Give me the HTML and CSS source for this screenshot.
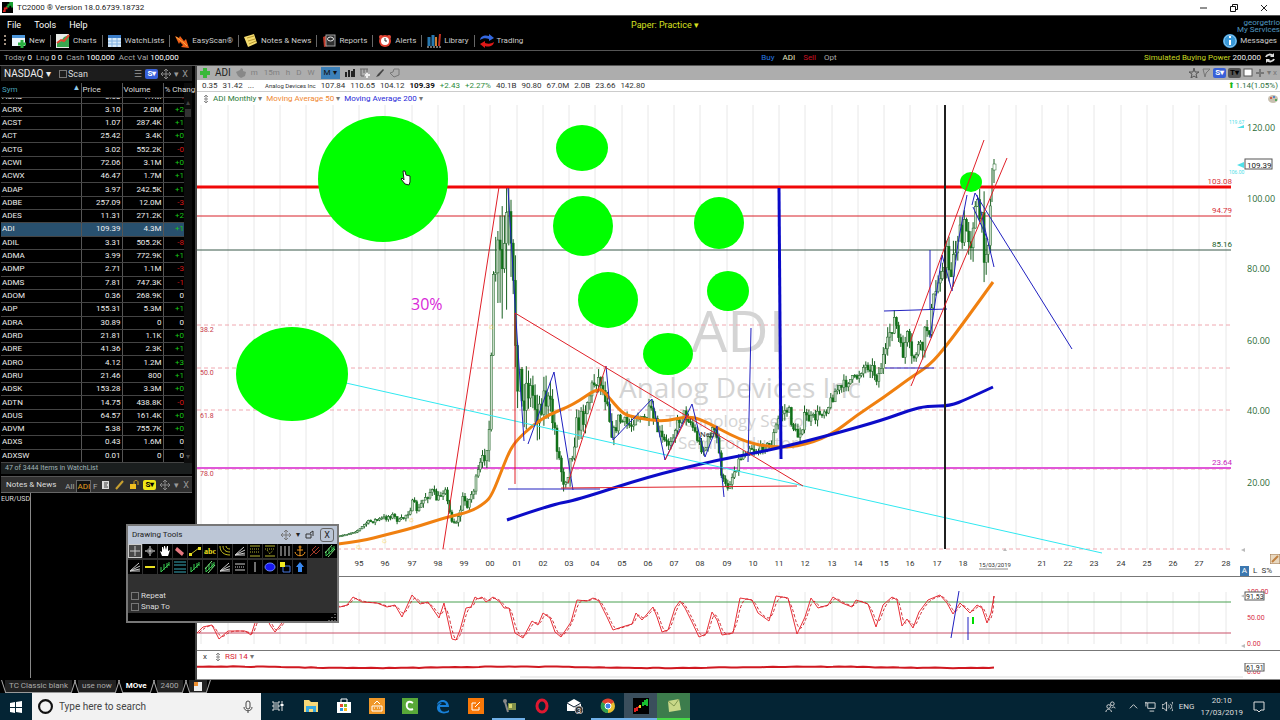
FILE: index.html
```html
<!DOCTYPE html>
<html lang="en">
<head>
    <meta charset="UTF-8">
    <meta name="viewport" content="width=device-width, initial-scale=1.0">
    <title>TC2000</title>
    <link rel="stylesheet" href="styles.css">
</head>
<body>
    <header class="titlebar">
        <svg class="logo" viewBox="0 0 12 12"><rect width="12" height="12" fill="#000"/><path d="M1 10h2V7h2V5" stroke="#e02020" stroke-width="2" fill="none"/><path d="M5 5h2V3h2V1h2v5" stroke="#18a030" stroke-width="2" fill="none"/></svg>
        <span class="title">TC2000 ® Version 18.0.6739.18732</span>
        <div class="window-buttons">
            <button aria-label="Minimize"><svg viewBox="0 0 10 10"><path d="M1 5h7" stroke="#222"/></svg></button>
            <button aria-label="Restore"><svg viewBox="0 0 10 10"><path d="M1.500 3.500h5v5h-5zM3.500 3V1.500h5v5H7" fill="none" stroke="#111"/></svg></button>
            <button aria-label="Close"><svg viewBox="0 0 10 10"><path d="M2 2l6 6M8 2l-6 6" stroke="#222"/></svg></button>
        </div>
    </header>

    <div class="menubar">
        <nav class="menu">
            <button>File</button>
            <button>Tools</button>
            <button>Help</button>
        </nav>
        <button class="account-name">Paper: Practice ▾</button>
        <div class="user">
            <a href="#">georgetrio</a>
            <a href="#">My Services</a>
        </div>
    </div>

    <nav class="toolbar">
        <svg class="grip" viewBox="0 0 4 14"><path d="M2 1v2M2 5v2M2 9v2" stroke="#a09080" stroke-width="2"/></svg>
        <button><svg viewBox="0 0 14 14"><rect y="1" width="13" height="11" fill="#eef6fc"/><rect y="1" width="13" height="3" fill="#4a94d8"/><path d="M10 6v8M6 10h8" stroke="#28b040" stroke-width="3"/></svg>New</button>
        <button><svg viewBox="0 0 14 14"><rect width="13" height="14" fill="#e8ece8"/><path d="M1 13V9l4-2 3-4 5-2v12z" fill="#38a850"/><path d="M1 9l4-3 3 1 5-6" fill="none" stroke="#e04830" stroke-width="2"/></svg>Charts</button>
        <button><svg viewBox="0 0 14 14"><rect y="1" width="13" height="12" fill="#d8eafa"/><rect y="1" width="13" height="3" fill="#3a7cc8"/><path d="M0 7h13M0 10h13M4 4v9M9 4v9" stroke="#80b0e0"/></svg>WatchLists</button>
        <button><svg viewBox="0 0 14 14"><path d="M0 2l4 2 1-2 4 5 2-2 3 9-8-1 2-2-3-3-1 2z" fill="#f06018"/><path d="M1 3l4 3 4 3 3 3" stroke="#f8b040" fill="none"/></svg>EasyScan®</button>
        <button><svg viewBox="0 0 14 14"><path d="M0 3l10-3 3 9-9 4z" fill="#f4dc70"/><path d="M3 4l7-2M4 7l7-2M5 10l7-3" stroke="#b89830"/></svg>Notes &amp; News</button>
        <button><svg viewBox="0 0 14 14"><path d="M1 3l5-2v11l-4 1z" fill="#c03828"/><rect x="4" y="1" width="9" height="11" fill="#303030" stroke="#a0a0a0"/><ellipse cx="8.500" cy="5" rx="3" ry="2" fill="none" stroke="#eee"/></svg>Reports</button>
        <button><svg viewBox="0 0 14 14"><circle cx="3" cy="3" r="2" fill="#e85040"/><circle cx="11" cy="3" r="2" fill="#e85040"/><circle cx="7" cy="7" r="6" fill="#e04030"/><circle cx="7" cy="7" r="4" fill="#fff"/><path d="M7 4v3h2" fill="none" stroke="#333"/></svg>Alerts</button>
        <button><svg viewBox="0 0 14 14"><path d="M2 3v9M6 1v11" stroke="#2878b0" stroke-width="3"/><path d="M9 3v9" stroke="#d08030" stroke-width="2"/><path d="M13 0l-1 12" stroke="#c03020" stroke-width="2"/><path d="M0 13h14" stroke="#ddd" stroke-dasharray="2 1"/></svg>Library</button>
        <button><svg viewBox="0 0 14 14"><path d="M0 6c1-5 6-5 9-4V0l5 4-5 3V5C6 4 3 4 0 6z" fill="#3468e0"/><path d="M14 8c-1 5-6 5-9 4v2L0 10l5-3v2c3 1 6 1 9-1z" fill="#e01818"/></svg>Trading</button>
        <button class="messages"><svg viewBox="0 0 14 14"><circle cx="7" cy="7" r="7" fill="#3898d8"/><circle cx="7" cy="7" r="6" fill="none" stroke="#90c8f0"/><path d="M7 2v2M7 6v5" stroke="#fff" stroke-width="2"/></svg>Messages</button>
    </nav>

    <div class="accountbar">
        <p>Today <b>0</b></p>
        <p>Lng <b>0 0</b></p>
        <p>Cash <b>100,000</b></p>
        <p>Acct Val <b>100,000</b></p>
        <div class="orders">
            <button class="buy">Buy</button>
            <span class="ticker">ADI</span>
            <button class="sell">Sell</button>
            <button>Opt</button>
        </div>
        <p class="power"><span>Simulated Buying Power</span> 200,000</p>
        <button aria-label="Refresh"><svg viewBox="0 0 10 10"><path d="M1 4c1-3 5-3 7-1M9 6c-1 3-5 3-7 1" fill="none" stroke="#ddd" stroke-width="2"/><path d="M9 0v4H5zM1 10V6h4z" fill="#ddd"/></svg></button>
    </div>

    <main class="workspace">
        <aside class="sidebar">
            <section class="watchlist">
                <div class="panel-head">
                    <button class="list-name">NASDAQ ▾</button>
                    <label><input type="checkbox">Scan</label>
                    <div class="panel-tools">
                        <button aria-label="Menu">☰</button>
                        <button class="sync">S▾</button>
                        <button aria-label="Move"><svg viewBox="0 0 10 10"><path d="M5 0v10M0 5h10M3 2l2-2 2 2M3 8l2 2 2-2M2 3L0 5l2 2M8 3l2 2-2 2" fill="none" stroke="#888"/></svg></button>
                        <button aria-label="Options">▾</button>
                        <button aria-label="Close">X</button>
                    </div>
                </div>
                <div class="table-wrap">
                    <table>
                        <thead>
                            <tr><th class="sym">Sym<i>▲</i></th><th>Price</th><th>Volume</th><th>% Chang</th></tr>
                        </thead>
                        <tbody id="rows"></tbody>
                    </table>
                    <div class="scrollbar"><i>▴</i><b></b><i class="down">▾</i></div>
                </div>
                <p class="count">47 of 3444 Items in WatchList</p>
            </section>
            <section class="notes">
                <div class="panel-head">
                    <h2>Notes &amp; News</h2>
                    <div class="note-tabs">
                        <button>All</button><button class="active">ADI</button><button>F</button>
                    </div>
                    <div class="panel-tools">
                        <button aria-label="Note"><svg viewBox="0 0 10 10"><rect x="1" y="1" width="7" height="8" fill="#ddd"/><path d="M3 3h4M3 5h3M3 7h4" stroke="#444"/></svg></button>
                        <button aria-label="Edit"><svg viewBox="0 0 10 10"><path d="M1 9l7-8" stroke="#c8a030" stroke-width="2"/></svg></button>
                        <button aria-label="Lock"><svg viewBox="0 0 10 10"><rect x="1" y="4" width="6" height="5" fill="#f0c020"/><path d="M5 4V2c0-2 4-2 4 0v3" fill="none" stroke="#d0a020"/></svg></button>
                        <button class="sync yellow">S▾</button>
                        <button aria-label="Move"><svg viewBox="0 0 10 10"><path d="M5 0v10M0 5h10M3 2l2-2 2 2M3 8l2 2 2-2M2 3L0 5l2 2M8 3l2 2-2 2" fill="none" stroke="#888"/></svg></button>
                        <button aria-label="Options">▾</button>
                        <button aria-label="Close">X</button>
                    </div>
                </div>
                <div class="notes-body"><p>EUR/USD</p></div>
            </section>
        </aside>

        <section class="chart">
            <div class="chart-head">
                <button aria-label="Add"><svg viewBox="0 0 10 10"><path d="M5 0v10M0 5h10" stroke="#38b838" stroke-width="4"/></svg></button>
                <span class="chart-symbol">ADI</span>
                <button aria-label="Share"><svg viewBox="0 0 10 10"><path d="M0 4l4-2 1-2 2 1v2l3 1-1 4-4 2-3-2z" fill="#888"/></svg></button>
                <div class="frames">
                    <button>m</button><button>15m</button><button>h</button><button>D</button><button>W</button><button class="active">M ▾</button>
                </div>
                <button aria-label="Bars"><svg viewBox="0 0 10 10"><path d="M1 9V4M4 9V2M7 9V3M9 9V1" stroke="#222" stroke-width="2"/></svg></button>
                <button aria-label="Indicator"><svg viewBox="0 0 10 10"><path d="M0 1h8M1 1v7h3M4 1v4M7 1v3" fill="none" stroke="#666"/><path d="M7 5v5M5 7h5" stroke="#eee" stroke-width="2"/></svg></button>
                <button aria-label="Draw"><svg viewBox="0 0 10 10"><path d="M1 9l2-3 5-5 1 1-5 6z" fill="#444"/></svg></button>
                <button aria-label="Note"><svg viewBox="0 0 10 10"><path d="M0 5l3-1 1-3h5v6l-5 2z" fill="none" stroke="#777"/></svg></button>
                <div class="chart-tools">
                    <button aria-label="Favorite"><svg viewBox="0 0 10 10"><path d="M5 0l1 4h4L7 6l1 4-3-2-3 2 1-4-3-2h4z" fill="none" stroke="#555"/></svg></button>
                    <button aria-label="Flag"><svg viewBox="0 0 10 10"><path d="M2 1h7L5 5 4 9z" fill="none" stroke="#777"/></svg></button>
                    <button class="sync">S▾</button>
                    <button class="sync gray">T▾</button>
                    <button aria-label="Window"><svg viewBox="0 0 10 10"><rect x="1" y="1" width="8" height="7" fill="#fff" stroke="#555"/></svg></button>
                    <button aria-label="Move"><svg viewBox="0 0 10 10"><path d="M5 1v8M1 5h8" stroke="#777" stroke-width="2"/></svg></button>
                    <button aria-label="Options">▾</button>
                    <button aria-label="Close">x</button>
                </div>
            </div>
            <div class="quote">
                <span>0.35</span><span>31.42</span><span class="dots">...</span><span class="company">Analog Devices Inc</span>
                <span>107.84</span><span>110.65</span><span>104.12</span><b>109.39</b>
                <span class="up">+2.43</span><span class="up">+2.27%</span>
                <span>40.1B</span><span>90.80</span><span>67.0M</span><span>2.0B</span><span>23.66</span><span>142.80</span>
                <span class="change"><i>⬆</i>1.14(1.05%)</span>
            </div>
            <div class="legend">
                <svg class="drag" viewBox="0 0 6 10"><path d="M3 1v8M1 3l2-2 2 2M1 7l2 2 2-2M1 5h4" fill="none" stroke="#888"/></svg>
                <button class="green">ADI Monthly <i>▾</i></button>
                <button class="orange">Moving Average 50 <i>▾</i></button>
                <button class="blue">Moving Average 200 <i>▾</i></button>
                <svg class="palette" viewBox="0 0 10 10"><ellipse cx="5" cy="5" rx="5" ry="4" fill="#c8c0b0"/><circle cx="3" cy="4" r="1" fill="#d04030"/><circle cx="6" cy="3" r="1" fill="#3070d0"/><circle cx="8" cy="6" r="1" fill="#30a040"/></svg>
            </div>

            <div class="price-pane">
                <svg class="pane" viewBox="197 105 1083 471" role="img" aria-label="ADI monthly price">
                    <g id="price-grid" class="grid"></g>
                    <g class="watermark">
                        <text x="738" y="352" class="w-symbol">ADI</text>
                        <text x="740" y="398" class="w-name">Analog Devices Inc</text>
                        <text x="738" y="427" class="w-sector">Technology Sector</text>
                        <text x="738" y="449" class="w-sector">Semiconductor</text>
                    </g>
                    <g class="fib">
                        <path d="M197 325H1231M197 368H1231M197 410H1231M197 469H1231M197 549H1231"/>
                        <text x="200" y="332">38.2</text>
                        <text x="200" y="375">50.0</text>
                        <text x="200" y="418">61.8</text>
                        <text x="200" y="476">78.0</text>
                    </g>
                    <path class="level-dark" d="M197 250H1231"/>
                    <path class="level-rose" d="M197 216H1231"/>
                    <path class="level-magenta" d="M197 468H1231"/>
                    <g id="candles"></g>
                    <g class="splits"><text x="355" y="549">☼</text><text x="381" y="543">☼</text><text x="408" y="522">☼</text><text x="488" y="329">☼</text></g>
                    <path id="ma50" class="ma50"/>
                    <path id="ma200" class="ma200"/>
                    <path class="cyan-line" d="M346 383L1102 553"/>
                    <path class="level-red" d="M197 187H1231"/>
                    <path class="blue-line" d="M508 188L516 320 524 441M528 444L554 372 573 490M508 489H600M606 366L613 440 652 399 665 460M665 460L692 404 705 457 717 426 724 497M751 328L748 462M884 311L947 309M885 368H934M930 250V310M930 338L942 255 952 291 958 243 967 195M972 205L975 193 1072 349M977 195L994 267M973 207L988 240"/>
                    <path class="blue-thick" d="M779 188L781 459"/>
                    <path class="cursor-line" d="M945 105V549"/>
                    <g class="dots-green">
                        <ellipse cx="383" cy="179" rx="65" ry="63"/>
                        <ellipse cx="582" cy="148" rx="26" ry="23"/>
                        <ellipse cx="583" cy="226" rx="30" ry="30"/>
                        <ellipse cx="719" cy="223" rx="25" ry="26"/>
                        <ellipse cx="608" cy="300" rx="30" ry="28"/>
                        <ellipse cx="728" cy="291" rx="21" ry="20"/>
                        <ellipse cx="668" cy="354" rx="25" ry="21"/>
                        <ellipse cx="292" cy="374" rx="56" ry="47"/>
                        <ellipse cx="971" cy="182" rx="11" ry="10"/>
                    </g>
                    <path class="red-line" d="M443 549L499 187M515 484V313L803 486M561 488L797 486M568 483L606 366M665 460L688 415M910 342L984 140M911 386L1007 158"/>
                    <text x="411" y="310" class="percent">30%</text>
                    <text x="700" y="437" class="neck">Neck</text>
                    <g class="level-labels">
                        <text x="1232" y="184" class="red">103.08</text>
                        <text x="1232" y="213" class="red">94.79</text>
                        <text x="1232" y="247" class="dark">85.16</text>
                        <text x="1232" y="465" class="magenta">23.64</text>
                    </g>
                    <g class="axis-y">
                        <text x="1247" y="131">120.00</text>
                        <text x="1247" y="202">100.00</text>
                        <text x="1247" y="272">80.00</text>
                        <text x="1247" y="344">60.00</text>
                        <text x="1247" y="414">40.00</text>
                        <text x="1247" y="486">20.00</text>
                    </g>
                    <g class="targets">
                        <text x="1229" y="124">119.67</text><path d="M1237 128l7-3v3z"/>
                        <text x="1229" y="174">106.00</text><path d="M1237 165l7-3v6z"/>
                    </g>
                    <rect x="1245" y="159" width="27" height="10" class="tag"/>
                    <text x="1247" y="168" class="tag-text">109.39</text>
                    <path d="M1241 550l4-2v4zM1003 551l2-3 2 3z" fill="#bbb"/>
                    <g id="axis-x" class="axis-x"></g>
                    <text x="979" y="567" class="date">15/03/2019</text>
                    <path d="M979 569h29" stroke="#888"/>
                    <path d="M405 184l-4-5 1-1 2 2-1-9h2l1 4 4 1v6l-1 3z" fill="#fff" stroke="#222"/>
                </svg>
                <div class="scale-buttons">
                    <button class="pencil" aria-label="Edit drawings"><svg viewBox="0 0 10 10"><rect width="10" height="10" fill="#e8d8c0" stroke="#a07850"/><path d="M2 8l6-6" stroke="#c08040" stroke-width="2"/></svg></button>
                    <button class="active">A</button><button>L</button><button>S%</button>
                </div>
            </div>

            <svg class="pane stoch" viewBox="197 577 1083 73" role="img" aria-label="Stochastics">
                <g id="stoch-grid" class="grid"></g>
                <path class="over-bought" d="M197 602H1231"/>
                <path class="over-sold" d="M197 633H1231"/>
                <path id="stoch-line" class="stoch-line"/>
                <path id="stoch-avg" class="stoch-avg"/>
                <path class="blue-line" d="M959 591L951 638M968 617V640"/>
                <path d="M973 617v7" stroke="#0d0" stroke-width="2"/>
                <text x="1247" y="594" class="osc">100.00</text>
                <text x="1247" y="620" class="osc">50.00</text>
                <text x="1247" y="646" class="osc">0.00</text>
                <rect x="1245" y="592" width="19" height="8" class="tag"/>
                <text x="1246" y="599" class="tag-small">91.53</text>
                <path d="M1241 646l4-2v4zM1241 596l4-2v4z" fill="#bbb"/>
            </svg>

            <div class="legend rsi-legend">
                <button aria-label="Close RSI">x</button>
                <svg class="drag" viewBox="0 0 6 10"><path d="M3 1v8M1 3l2-2 2 2M1 7l2 2 2-2M1 5h4" fill="none" stroke="#888"/></svg>
                <button class="red">RSI 14 <i>▾</i></button>
            </div>
            <svg class="pane" viewBox="197 663 1083 16" role="img" aria-label="RSI">
                <path id="rsi" class="rsi-line"/>
                <path d="M520 677H1243" stroke="#ddd"/>
                <text x="1247" y="674" class="osc">0.00</text>
                <rect x="1245" y="663" width="19" height="8" class="tag"/>
                <text x="1246" y="670" class="tag-small">61.91</text>
            </svg>
        </section>

        <section class="tools-window">
            <div class="tools-title">
                <h2>Drawing Tools</h2>
                <svg viewBox="0 0 10 10"><path d="M5 0v10M0 5h10M3 2l2-2 2 2M3 8l2 2 2-2M2 3L0 5l2 2M8 3l2 2-2 2" fill="none" stroke="#777"/></svg>
                <i>▾</i>
                <svg class="dock" viewBox="0 0 10 10"><path d="M1 4h5v4H1zM5 3l3-2v5" fill="none" stroke="#333"/></svg>
                <button aria-label="Close">X</button>
            </div>
            <div class="tool-grid" id="tool-grid"></div>
            <div class="tool-options">
                <label><input type="checkbox">Repeat</label>
                <label><input type="checkbox">Snap To</label>
            </div>
            <div class="resize"><svg viewBox="0 0 10 8"><path d="M8 1v1M5 4v1M8 4v1M2 7v1M5 7v1M8 7v1" stroke="#bbb"/></svg></div>
        </section>
    </main>

    <nav class="layout-tabs">
        <button>TC Classic blank</button>
        <button>use now</button>
        <button class="active">MOve</button>
        <button>2400</button>
        <button aria-label="New layout"><svg viewBox="0 0 10 10"><rect x="1" y="1" width="8" height="9" fill="#eee"/><rect x="1" y="1" width="4" height="4" fill="#f09030"/></svg></button>
    </nav>

    <footer class="taskbar">
        <button class="start" aria-label="Start"><svg viewBox="0 0 12 12"><path d="M0 2l5-1v5H0zM6 1l6-1v6H6zM0 7h5v5l-5-1zM6 7h6v5l-6-1z" fill="#fff"/></svg></button>
        <label class="search">
            <svg viewBox="0 0 14 14"><circle cx="7" cy="7" r="6" fill="none" stroke="#111" stroke-width="2"/></svg>
            <input type="text" placeholder="Type here to search" aria-label="Search">
            <svg class="mic" viewBox="0 0 10 14"><rect x="3" y="1" width="4" height="8" rx="2" fill="none" stroke="#444"/><path d="M1 7c0 5 8 5 8 0M5 11v2" fill="none" stroke="#444"/></svg>
        </label>
        <div class="apps">
            <button aria-label="Task view"><svg viewBox="0 0 16 16"><path d="M3 3v2h6V3M3 13v-2h6v2M3 7h6v2H3zM12 3v10" fill="none" stroke="#ddd"/><path d="M12 6v2" stroke="#fff" stroke-width="3"/></svg></button>
            <button aria-label="Explorer"><svg viewBox="0 0 16 16"><path d="M1 2h5l2 2h7v10H1z" fill="#f8d878"/><path d="M3 14V8h10v6h-3v-3H6v3z" fill="#38a8e0"/></svg></button>
            <button aria-label="Store"><svg viewBox="0 0 16 16"><path d="M5 4V1h6v3" fill="none" stroke="#fff"/><path d="M1 4h14v11H1z" fill="#fff"/><path d="M4 6h3v3H4z" fill="#e84830"/><path d="M8 6h3v3H8z" fill="#78b828"/><path d="M4 10h3v3H4z" fill="#2898e0"/><path d="M8 10h3v3H8z" fill="#f8b818"/></svg></button>
            <button aria-label="Screen app"><svg viewBox="0 0 16 16"><rect width="16" height="16" fill="#f09828"/><path d="M3 8h10v5H3zM5 10h1M8 10h1M10 10h1M5 6l3-3 3 3" fill="none" stroke="#fff"/></svg></button>
            <button aria-label="Camtasia"><svg viewBox="0 0 16 16"><rect width="16" height="16" fill="#58a838"/><path d="M11 5c-5-3-7 0-6 4 1 3 4 3 6 2" fill="none" stroke="#fff" stroke-width="2"/></svg></button>
            <button aria-label="Edge"><svg viewBox="0 0 16 16"><path d="M2 7C3 0 14 0 14 9H5c0 5 5 6 9 3v2c-5 3-12 1-12-4 0-3 2-5 5-5-1 1-2 1-2 2h6c0-4-6-4-9 0z" fill="#1880d8"/></svg></button>
            <button aria-label="Editor"><svg viewBox="0 0 16 16"><rect width="16" height="16" fill="#f87808"/><path d="M11 9v3H4V5h4M7 9l5-5" fill="none" stroke="#fff"/></svg></button>
            <button class="running" aria-label="Recorder"><svg viewBox="0 0 16 16"><circle cx="4" cy="3" r="2" fill="#888"/><path d="M4 4l3 10" stroke="#888" stroke-width="2"/><path d="M7 5h8v7H7z" fill="#80904a"/><path d="M8 6h3v4H8z" fill="#d8d870"/></svg></button>
            <button aria-label="Opera"><svg viewBox="0 0 16 16"><ellipse cx="8" cy="8" rx="5" ry="6" fill="none" stroke="#e01830" stroke-width="3"/></svg></button>
            <button aria-label="Mail"><svg viewBox="0 0 16 16"><path d="M0 5l7-4 7 4v8H0z" fill="#fff"/><path d="M0 5l7 4 7-4" fill="none" stroke="#123"/><circle cx="12" cy="12" r="4" fill="#333" stroke="#aaa"/><text x="10" y="15" font-size="7" fill="#fff">3</text></svg></button>
            <button class="running" aria-label="Chrome"><svg viewBox="0 0 16 16"><circle cx="8" cy="8" r="7" fill="#e8c030"/><path d="M8 8L2 4a7 7 0 0112 0z" fill="#e04030"/><path d="M8 8l0 7A7 7 0 012 4z" fill="#30a050"/><circle cx="8" cy="8" r="3" fill="#4080e8" stroke="#fff"/></svg></button>
            <button class="running current" aria-label="TC2000"><svg viewBox="0 0 16 16"><rect width="16" height="16" fill="#000"/><path d="M2 14v-4M4 13V9M6 10V8" stroke="#e02020" stroke-width="2"/><path d="M7 10V7" stroke="#e8d020" stroke-width="2"/><path d="M10 8V4M12 7V2M14 8V1" stroke="#18c030" stroke-width="2"/></svg></button>
            <button class="running green-app" aria-label="Notes"><svg viewBox="0 0 16 16"><path d="M2 3l11-2 2 11-12 2z" fill="#c8d888"/><path d="M2 3l6 5 5-7" fill="none" stroke="#809850"/></svg></button>
        </div>
        <div class="tray">
            <svg viewBox="0 0 12 12"><circle cx="4" cy="6" r="2" fill="none" stroke="#ddd"/><path d="M1 12c0-4 6-4 6 0M7 8c1-2 4-2 4 0" fill="none" stroke="#ddd"/><circle cx="8" cy="3" r="2" fill="none" stroke="#ddd"/></svg>
            <svg class="up-arrow" viewBox="0 0 12 12"><path d="M2 8l4-4 4 4" fill="none" stroke="#ddd"/></svg>
            <svg viewBox="0 0 12 12"><path d="M3 2h8v6H3zM5 11h5M1 1v5M0 2h3" fill="none" stroke="#ddd"/></svg>
            <svg viewBox="0 0 12 12"><path d="M0 4h2l3-3v10L2 8H0zM7 4c1 1 1 3 0 4M9 3c2 2 2 4 0 6M11 1c2 3 2 7 0 10" fill="none" stroke="#ddd"/></svg>
            <span>ENG</span>
            <p class="clock">20:10<br>17/03/2019</p>
            <svg class="bell" viewBox="0 0 12 12"><path d="M1 1h10v8H8l-2 2-2-2H1z" fill="none" stroke="#ddd"/></svg>
        </div>
    </footer>
    <script src="chart.js"></script>
</body>
</html>
```
FILE: styles.css
```css
* {
    box-sizing: border-box;
    margin: 0;
    padding: 0;
}

body {
    display: flex;
    flex-direction: column;
    min-height: 100vh;
    background: #000;
    color: #ddd;
    font-family: Roboto, "Open Sans", sans-serif;
    font-size: 8px;
    line-height: 12px;
    overflow-x: hidden;
}

button {
    background: none;
    border: none;
    color: inherit;
    font: inherit;
    white-space: nowrap;
}

button svg {
    display: block;
    width: 10px;
    height: 10px;
}

a {
    color: inherit;
    text-decoration: none;
}

i {
    font-style: normal;
}

h2 {
    font-size: 8px;
    font-weight: normal;
    white-space: nowrap;
}

input[type="checkbox"] {
    appearance: none;
    width: 8px;
    height: 8px;
    border: 1px solid #777;
}

label {
    display: flex;
    align-items: center;
    gap: 1px;
}

/* title and menus */
.titlebar {
    display: flex;
    align-items: center;
    gap: 4px;
    height: 15px;
    padding-left: 2px;
    background: #fff;
    color: #222;
}

.logo {
    width: 11px;
    height: 11px;
}

.window-buttons {
    display: flex;
    gap: 20px;
    margin-left: auto;
    padding-right: 11px;
}

.menubar {
    display: grid;
    grid-template-columns: 1fr auto 1fr;
    height: 17px;
    padding-left: 50px;
    align-items: center;
    border-top: 1px solid #555;
    font-size: 9px;
}

.menu {
    display: flex;
    gap: 13px;
    margin-left: -43px;
    color: #fff;
}

.account-name {
    color: #d8e020;
}

.user {
    display: flex;
    flex-direction: column;
    align-items: flex-end;
    padding-top: 3px;
    font-size: 8px;
    line-height: 7px;
    color: #5098c0;
}

.toolbar {
    display: flex;
    align-items: center;
    height: 19px;
    padding-left: 3px;
    border-bottom: 1px solid #555;
    color: #ccc;
}

.toolbar button {
    display: flex;
    align-items: center;
    gap: 3px;
    height: 12px;
    padding: 0 5px;
    border-right: 1px solid #666;
}

.toolbar button svg {
    width: 14px;
    height: 14px;
}

.grip {
    width: 4px;
    height: 14px;
}

.toolbar button:nth-last-child(2) {
    border: none;
}

.toolbar .messages {
    margin-left: auto;
    padding-right: 3px;
    border: none;
}

.accountbar {
    display: flex;
    gap: 4px;
    align-items: center;
    height: 15px;
    padding: 0 5px 0 4px;
    border-bottom: 1px solid #555;
    color: #aaa;
}

.accountbar b {
    font-weight: normal;
    color: #fff;
}

.orders {
    display: flex;
    gap: 8px;
    margin: 0 auto;
    padding-left: 275px;
}

.buy {
    color: #2878e0;
}

.ticker {
    color: #e8e8c0;
}

.sell {
    color: #c81020;
}

.power {
    color: #eee;
}

.power span {
    color: #c8d820;
}

/* left side */
.workspace {
    display: flex;
    flex: 1;
    position: relative;
}

.sidebar {
    display: flex;
    flex-direction: column;
    width: 197px;
    padding: 0 3px 0 1px;
    border-right: 2px solid #444;
}

.watchlist {
    display: flex;
    flex-direction: column;
    height: 410px;
}

.panel-head {
    display: flex;
    align-items: center;
    height: 15px;
    padding-left: 3px;
    background: #1c1c1c;
}

.list-name {
    margin-right: 8px;
    font-size: 10px;
    color: #eee;
}

.panel-head label {
    font-size: 9px;
}

.panel-tools {
    display: flex;
    align-items: center;
    gap: 3px;
    margin-left: auto;
    padding-right: 4px;
    color: #999;
    font-size: 9px;
}

.sync {
    padding: 0 2px;
    border-radius: 2px;
    background: #3860d8;
    color: #fff;
    font-size: 8px;
    font-weight: bold;
    line-height: 10px;
}

.sync.yellow {
    background: #f0e818;
    color: #000;
}

.sync.gray {
    background: #555;
    color: #000;
}

.table-wrap {
    display: flex;
    flex: 1;
    margin-top: 2px;
}

table {
    position: relative;
    flex: none;
    width: 183px;
    height: 100%;
    table-layout: fixed;
    border-collapse: collapse;
    font-size: 8px;
}

th,
td {
    overflow: hidden;
    border-right: 1px solid #555;
    border-bottom: 1px solid #444;
    line-height: 12px;
    white-space: nowrap;
}

th {
    height: 14px;
    padding-left: 1px;
    font-weight: normal;
    text-align: left;
    width: 41px;
}

th:last-child {
    width: 21px;
    overflow: visible;
}

th.sym {
    width: 80px;
    color: #48a0b8;
}

th i {
    float: right;
    color: #90c8e8;
    line-height: 8px;
}

td {
    padding: 0 1px;
    text-align: right;
    color: #eee;
}

td:first-child {
    text-align: left;
}

td:last-child,
th:last-child {
    border-right: none;
    padding-right: 0;
}

td.plus {
    color: #18c818;
}

td.minus {
    color: #d81818;
}

tr.selected {
    background: #28506e;
}

.cut td {
    height: 6px;
}

.cut div {
    display: flex;
    align-items: flex-end;
    justify-content: flex-end;
    height: 5px;
    overflow: hidden;
}

.cut td:first-child div {
    justify-content: flex-start;
}

.scrollbar {
    display: flex;
    flex-direction: column;
    align-items: center;
    flex: 1;
    padding-top: 14px;
    background: #0c0c0c;
    color: #444;
}

.scrollbar b {
    width: 6px;
    height: 8px;
    background: #333;
}

.scrollbar .down {
    margin-top: auto;
}

.count {
    height: 11px;
    margin-bottom: 2px;
    padding-left: 4px;
    background: #1a1e1e;
    color: #a0b4b8;
    font-size: 7px;
    line-height: 11px;
}

.notes {
    display: flex;
    flex-direction: column;
    flex: 1;
    border-top: 1px solid #555;
}

.notes .panel-head {
    height: 16px;
    padding-left: 5px;
    background: #303030;
    border-bottom: 1px solid #666;
}

.notes .panel-tools {
    gap: 4px;
    padding-right: 3px;
}

.note-tabs {
    display: flex;
    gap: 2px;
    align-self: flex-end;
    margin-left: 9px;
    line-height: 11px;
    color: #aaa;
}

.note-tabs .active {
    border: 1px solid #666;
    border-bottom: none;
    background: #111;
    color: #e8a020;
}

.notes-body {
    flex: 1;
    margin-bottom: 2px;
}

.notes-body p {
    width: 30px;
    height: 100%;
    border-right: 1px solid #888;
    font-size: 7px;
}

/* chart */
.chart {
    flex: 1;
    min-width: 0;
    background: #fff;
    color: #333;
    border-bottom: 1px solid #888;
}

.chart-head {
    display: flex;
    align-items: center;
    gap: 5px;
    height: 14px;
    padding: 0 3px;
    background: #adadad;
}

.chart-symbol {
    font-size: 10px;
    color: #222;
}

.frames {
    display: flex;
    gap: 6px;
    color: #808080;
}

.frames .active {
    padding: 0 3px;
    background: #3c80b8;
    color: #111;
}

.chart-tools {
    display: flex;
    align-items: center;
    gap: 2px;
    margin-left: auto;
    color: #777;
}

.quote {
    display: flex;
    gap: 5px;
    height: 12px;
    padding: 0 2px 0 5px;
    border-bottom: 1px solid #ccc;
}

.quote b {
    color: #111;
}

.dots {
    margin-right: 6px;
}

.company {
    font-size: 6px;
}

.up {
    color: #2e8b3a;
}

.change {
    margin-left: auto;
    color: #2e7040;
}

.change i {
    color: #18b818;
}

.legend {
    display: flex;
    align-items: center;
    gap: 4px;
    height: 13px;
    padding: 0 2px 0 6px;
}

.legend i {
    color: #777;
}

.drag {
    width: 6px;
    height: 10px;
}

.green {
    color: #2a7a38;
}

.orange {
    color: #f08830;
}

.blue {
    color: #2828d8;
}

.palette {
    width: 10px;
    height: 10px;
    margin-left: auto;
}

.price-pane {
    position: relative;
    border-bottom: 1px solid #777;
}

.pane {
    display: block;
    width: 100%;
    height: auto;
}

.stoch {
    border-bottom: 1px solid #777;
    box-sizing: content-box;
}

.rsi-legend {
    height: 12px;
    gap: 8px;
}

.rsi-legend .red {
    margin-left: -4px;
    color: #d82030;
}

.pane path {
    stroke-linejoin: round;
}

.grid {
    stroke: #e8e8e8;
}

.watermark {
    fill: #d4d4d4;
    font-family: "Open Sans", sans-serif;
    text-anchor: middle;
}

.w-symbol {
    font-size: 57px;
}

.w-name {
    font-size: 28px;
}

.w-sector {
    font-size: 17px;
}

.fib path {
    stroke: #f0a8b0;
    stroke-dasharray: 4 3;
}

.fib text {
    fill: #c83848;
    font-size: 7px;
}

.level-dark { stroke: #385848; }
.level-rose { stroke: #d82028; }
.level-magenta { stroke: #e058d8; stroke-width: 2; }
.level-red { stroke: #f00808; stroke-width: 3; }
.wick { stroke: #186020; }
.body-down { fill: #107018; stroke: #107018; }
.body-up { fill: #c8dcc8; stroke: #186020; }
.ma50 { fill: none; stroke: #f08010; stroke-width: 3; }
.ma200 { fill: none; stroke: #0c0cc8; stroke-width: 3; }
.cyan-line { stroke: #30e8f0; }
.red-line { fill: none; stroke: #e02028; }
.blue-line { fill: none; stroke: #2020c0; }
.blue-thick { stroke: #0808c8; stroke-width: 3; }
.cursor-line { stroke: #202020; stroke-width: 2; }
.dots-green { fill: #00ff00; }
.splits { fill: #f8d040; font-size: 8px; }

.percent {
    fill: #d828d8;
    font-family: "Open Sans", sans-serif;
    font-size: 16px;
}

.neck {
    fill: #333;
    font-size: 8px;
}

.level-labels {
    font-size: 8px;
    text-anchor: end;
}

.level-labels .red { fill: #d83038; }
.level-labels .dark { fill: #206028; }
.level-labels .magenta { fill: #c828c0; }

.axis-y {
    fill: #2c6c38;
    font-family: "Open Sans", sans-serif;
    font-size: 9px;
}

.targets {
    fill: #50e0e8;
    font-size: 5px;
}

.tag {
    fill: #fff;
    stroke: #555;
}

.tag-text {
    fill: #222;
    font-size: 8px;
}

.tag-small {
    fill: #222;
    font-size: 7px;
}

.axis-x {
    fill: #333;
    font-size: 8px;
    text-anchor: middle;
}

.date {
    fill: #333;
    font-size: 6px;
}

.scale-buttons {
    position: absolute;
    right: 8px;
    bottom: 0;
    display: flex;
    gap: 4px;
    line-height: 10px;
}

.scale-buttons .active {
    padding: 0 2px;
    background: #3c78b0;
    color: #fff;
}

.pencil {
    position: absolute;
    right: -8px;
    bottom: 12px;
}

.over-bought { stroke: #48a050; }
.over-sold { stroke: #c85068; }
.stoch-line { fill: none; stroke: #e83038; }
.stoch-avg { fill: none; stroke: #d02830; stroke-dasharray: 3 2; }
.rsi-line { fill: none; stroke: #d01820; stroke-width: 2; }

.osc {
    fill: #d83048;
    font-size: 7px;
}

/* floating palette */
.tools-window {
    position: absolute;
    left: 126px;
    top: 458px;
    border: 2px solid #777;
    background: #303030;
    color: #ddd;
}

.tools-title {
    display: flex;
    align-items: center;
    gap: 5px;
    height: 18px;
    padding: 0 3px 0 4px;
    background: #bcc6d6;
    color: #222;
}

.tools-title h2 {
    margin-right: auto;
}

.tools-title svg {
    width: 10px;
    height: 10px;
}

.tools-title button {
    width: 14px;
    border: 1px solid #666;
    border-radius: 3px;
    font-size: 9px;
}

.tool-grid {
    display: grid;
    grid-template-columns: repeat(14, 14px);
    gap: 2px 1px;
}

.tool-grid button {
    height: 14px;
    background: #000;
}

.tool-grid button:first-child {
    background: #484848;
    border: 1px solid #ccc;
}

.tool-grid svg {
    width: 12px;
    height: 12px;
    margin: auto;
    fill: none;
}

.tool-options {
    padding: 16px 0 1px 3px;
    line-height: 11px;
}

.tool-options label {
    gap: 2px;
}

.resize {
    height: 8px;
    background: #000;
}

.resize svg {
    display: block;
    width: 10px;
    height: 8px;
    margin-left: auto;
}

/* layout tabs */
.layout-tabs {
    display: flex;
    gap: 6px;
    height: 13px;
    padding-left: 5px;
    color: #aaa;
}

.layout-tabs button {
    position: relative;
    padding: 0 4px;
    background: #222;
    border-bottom: 1px solid #999;
}

.layout-tabs button::before,
.layout-tabs button::after {
    content: "";
    position: absolute;
    top: 0;
    bottom: 0;
    left: -2px;
    border-left: 1px solid #aaa;
    transform: skewX(18deg);
}

.layout-tabs button::after {
    left: auto;
    right: -2px;
    transform: skewX(-18deg);
}

.layout-tabs .active {
    background: #000;
    color: #fff;
    font-weight: bold;
}

/* taskbar */
.taskbar {
    display: flex;
    height: 27px;
    background: #042434;
    color: #ddd;
}

.start {
    width: 32px;
}

.start svg {
    width: 12px;
    height: 12px;
    margin: auto;
}

.search {
    display: flex;
    align-items: center;
    gap: 6px;
    width: 229px;
    padding: 0 8px 0 6px;
    background: #f2f2f2;
}

.search svg {
    width: 15px;
    height: 15px;
}

.search input {
    flex: 1;
    min-width: 0;
    border: none;
    background: none;
    font: inherit;
    font-size: 10px;
}

.search input::placeholder {
    color: #444;
}

.search .mic {
    width: 10px;
    height: 14px;
}

.apps {
    display: flex;
}

.apps button {
    width: 33px;
    border-bottom: 2px solid transparent;
}

.apps svg {
    width: 16px;
    height: 16px;
    margin: auto;
}

.apps .running {
    border-bottom-color: #70b0e8;
}

.apps .current {
    background: #3a4e5c;
}

.apps .green-app {
    background: #3c7c4c;
    border-bottom-color: #48d848;
}

.tray {
    display: flex;
    align-items: center;
    gap: 6px;
    margin-left: auto;
    padding-right: 15px;
}

.tray svg {
    width: 11px;
    height: 11px;
}

.tray .up-arrow {
    margin-left: 6px;
}

.clock {
    text-align: center;
}

.tray .bell {
    width: 12px;
    height: 12px;
    margin-left: 4px;
}
```
FILE: chart.js
```js
// watchlist rows: symbol, price, volume, % change
const stocks = [
    ['ACRX', '3.10', '2.0M', '+2'], ['ACST', '1.07', '287.4K', '+1'], ['ACT', '25.42', '3.4K', '+0'],
    ['ACTG', '3.02', '552.2K', '-0'], ['ACWI', '72.06', '3.1M', '+0'], ['ACWX', '46.47', '1.7M', '+1'],
    ['ADAP', '3.97', '242.5K', '+1'], ['ADBE', '257.09', '12.0M', '-3'], ['ADES', '11.31', '271.2K', '+2'],
    ['ADI', '109.39', '4.3M', '+1'], ['ADIL', '3.31', '505.2K', '-8'], ['ADMA', '3.99', '772.9K', '+1'],
    ['ADMP', '2.71', '1.1M', '-3'], ['ADMS', '7.81', '747.3K', '-1'], ['ADOM', '0.36', '268.9K', '0'],
    ['ADP', '155.31', '5.3M', '+1'], ['ADRA', '30.89', '0', '0'], ['ADRD', '21.81', '1.1K', '+0'],
    ['ADRE', '41.36', '2.3K', '+1'], ['ADRO', '4.12', '1.2M', '+3'], ['ADRU', '21.46', '800', '+1'],
    ['ADSK', '153.28', '3.3M', '+0'], ['ADTN', '14.75', '438.8K', '-0'], ['ADUS', '64.57', '161.4K', '+0'],
    ['ADVM', '5.38', '755.7K', '+0'], ['ADXS', '0.43', '1.6M', '0'], ['ADXSW', '0.01', '0', '0']
];

let html = '<tr class="cut"><td><div>ACRS</div></td><td><div>5.63</div></td><td><div>1.1M</div></td><td class="minus"><div>-4</div></td></tr>';
stocks.forEach(([sym, price, volume, change]) => {
    const sign = change[0] === '+' ? 'plus' : change[0] === '-' ? 'minus' : '';
    html += `<tr${sym === 'ADI' ? ' class="selected"' : ''}><td>${sym}</td><td>${price}</td><td>${volume}</td><td class="${sign}">${change}</td></tr>`;
});
document.getElementById('rows').innerHTML = html;

// year grid and labels, 1989 to 2028
const yearX = (year) => Math.round(359 + (year - 1995) * 26.26);
let grid = '';
let oscGrid = '';
let years = '';
for (let year = 1989; year <= 2028; year++) {
    const x = yearX(year);
    grid += `<path d="M${x} 105V549"/>`;
    oscGrid += `<path d="M${x} 592V644"/>`;
    if (year >= 1995 && year !== 2019 && year !== 2020) {
        years += `<text x="${x}" y="566">${String(year).slice(2)}</text>`;
    }
}
document.getElementById('price-grid').innerHTML = grid;
document.getElementById('stoch-grid').innerHTML = oscGrid;
document.getElementById('axis-x').innerHTML = years;

// price track: x, y of the close, size of the monthly range
const track = [
    [338, 537, 2], [350, 533, 3], [359, 530, 3], [366, 523, 6], [373, 521, 6], [385, 518, 8], [392, 515, 8],
    [400, 522, 8], [408, 512, 9], [413, 503, 12], [418, 511, 9], [425, 497, 12], [431, 491, 15], [438, 500, 12],
    [446, 486, 8], [448, 508, 10], [453, 522, 10], [458, 520, 10], [463, 499, 16], [468, 504, 14], [475, 485, 16],
    [480, 466, 16], [485, 455, 18], [489, 430, 30], [491, 385, 50], [493, 310, 90], [495, 265, 90], [499, 270, 120],
    [502, 280, 160], [505, 250, 170], [508, 240, 170], [511, 280, 140], [514, 320, 120], [518, 360, 100], [522, 405, 60],
    [526, 385, 50], [532, 392, 44], [537, 412, 44], [544, 395, 40], [550, 408, 40], [555, 430, 30], [560, 465, 28],
    [564, 480, 26], [570, 462, 34], [576, 428, 34], [583, 416, 30], [590, 393, 30], [596, 378, 26], [601, 380, 26],
    [604, 396, 28], [607, 392, 30], [610, 422, 24], [613, 437, 20], [618, 419, 20], [625, 423, 18], [631, 426, 18],
    [636, 413, 18], [643, 422, 18], [650, 412, 22], [656, 426, 18], [662, 440, 18], [668, 445, 14], [675, 429, 14],
    [682, 414, 18], [688, 416, 18], [694, 430, 16], [700, 446, 16], [705, 450, 14], [712, 428, 16], [717, 440, 22],
    [721, 468, 24], [724, 487, 16], [728, 486, 12], [734, 472, 14], [740, 458, 14], [750, 446, 12], [756, 452, 12],
    [764, 446, 12], [771, 446, 14], [775, 430, 16], [781, 412, 20], [788, 410, 18], [793, 425, 20], [797, 438, 18],
    [805, 417, 18], [812, 420, 16], [820, 413, 16], [828, 407, 14], [836, 390, 16], [842, 388, 16], [848, 380, 16],
    [855, 380, 16], [863, 367, 16], [870, 365, 18], [878, 378, 20], [883, 358, 24], [886, 357, 26], [890, 331, 26],
    [895, 318, 26], [898, 337, 30], [902, 357, 22], [907, 336, 26], [912, 362, 22], [918, 347, 22], [922, 352, 24],
    [926, 328, 26], [930, 326, 26], [933, 303, 30], [938, 283, 30], [942, 260, 30], [945, 272, 38], [947, 253, 34],
    [950, 273, 36], [954, 256, 36], [958, 233, 36], [962, 243, 40], [965, 227, 48], [968, 233, 40], [971, 238, 40],
    [974, 211, 38], [977, 208, 34], [980, 218, 40], [984, 243, 60], [987, 235, 54], [989, 243, 60], [991, 198, 30],
    [994, 166, 10]
];

function valueAt(x) {
    let i = 1;
    while (i < track.length - 1 && track[i][0] < x) i++;
    const [a, b] = [track[i - 1], track[i]];
    const t = (x - a[0]) / (b[0] - a[0]);
    return [a[1] + (b[1] - a[1]) * t, a[2] + (b[2] - a[2]) * t];
}

let seed = 7;
function random() {
    seed = (seed * 16807) % 2147483647;
    return seed / 2147483647;
}

let candles = '';
let open = 537;
for (let x = 338; x <= 992; x += 2.19) {
    const [mid, range] = valueAt(x);
    const close = mid + (random() - 0.5) * range * 0.7;
    const top = Math.max(190, Math.min(open, close));
    const bottom = Math.max(open, close);
    const high = Math.max(188, top - random() * range * 0.4);
    const low = bottom + random() * range * 0.4;
    candles += `<path class="wick" d="M${x.toFixed(1)} ${high.toFixed(1)}V${low.toFixed(1)}"/>`;
    candles += `<rect class="${close > open ? 'body-down' : 'body-up'}" stroke-width="0.5" x="${(x - 1).toFixed(1)}" y="${top.toFixed(1)}" width="2" height="${Math.max(1, bottom - top).toFixed(1)}"/>`;
    open = close;
}
// the last two months stand above the old high
candles += '<path class="wick" d="M992 168V202M994 159V183"/>';
candles += '<rect x="993" y="164" width="3" height="6" fill="#fff" stroke="#186020" stroke-width="0.5"/>';
document.getElementById('candles').innerHTML = candles;

// curve through the midpoints of the given points
function smooth(points) {
    let d = `M${points[0]}`;
    for (let i = 1; i < points.length - 1; i++) {
        const mx = (points[i][0] + points[i + 1][0]) / 2;
        const my = (points[i][1] + points[i + 1][1]) / 2;
        d += `Q${points[i]} ${mx},${my}`;
    }
    return d + `L${points[points.length - 1]}`;
}

const ma50 = [[338, 544], [362, 541], [385, 535], [413, 528], [447, 517], [470, 512], [485, 503], [492, 495], [503, 467],
    [510, 450], [517, 440], [533, 425], [550, 414], [573, 405], [599, 387], [607, 395], [622, 413], [632, 417], [663, 422],
    [687, 416], [703, 420], [740, 440], [767, 447], [797, 447], [830, 436], [857, 415], [883, 398], [910, 378], [930, 365],
    [947, 345], [967, 318], [993, 282]];
const ma200 = [[507, 520], [550, 505], [577, 500], [647, 477], [713, 461], [750, 454], [783, 447], [830, 435], [883, 420],
    [910, 410], [927, 406], [950, 406], [967, 399], [993, 387]];
document.getElementById('ma50').setAttribute('d', smooth(ma50));
document.getElementById('ma200').setAttribute('d', smooth(ma200));

const stoch = [[197, 633], [203, 627], [212, 625], [219, 639], [228, 631], [245, 631], [251, 635], [255, 623], [262, 605],
    [270, 625], [275, 632], [282, 623], [300, 600], [320, 604], [340, 607], [347, 605], [353, 597], [362, 602], [377, 603],
    [387, 607], [395, 605], [402, 617], [412, 595], [420, 604], [428, 602], [439, 618], [444, 603], [452, 639], [456, 640],
    [460, 630], [466, 608], [471, 607], [475, 597], [478, 599], [482, 597], [486, 602], [493, 597], [500, 602], [504, 608],
    [509, 608], [515, 633], [523, 638], [532, 621], [538, 625], [543, 613], [550, 618], [555, 632], [561, 637], [571, 622],
    [577, 600], [587, 601], [593, 598], [599, 601], [607, 617], [613, 630], [622, 627], [632, 624], [636, 613], [642, 620],
    [653, 607], [657, 617], [662, 632], [668, 630], [675, 608], [680, 601], [685, 608], [692, 622], [699, 637], [706, 634],
    [712, 612], [717, 620], [722, 635], [733, 633], [740, 598], [752, 600], [758, 613], [769, 621], [776, 596], [788, 598],
    [797, 634], [805, 617], [811, 598], [818, 608], [828, 605], [833, 597], [842, 603], [852, 607], [856, 600], [868, 604],
    [876, 627], [883, 605], [892, 597], [897, 600], [902, 626], [907, 619], [913, 628], [919, 612], [928, 600], [940, 595],
    [947, 603], [953, 614], [960, 603], [970, 613], [977, 605], [982, 608], [987, 623], [991, 613], [994, 596]];
document.getElementById('stoch-line').setAttribute('d', 'M' + stoch.join('L'));
document.getElementById('stoch-avg').setAttribute('d', smooth(stoch.map(([x, y]) => [Math.min(x + 2, 994), y])));

const rsi = [];
for (let x = 197; x <= 997; x += 6) {
    rsi.push([Math.min(x, 994), (667 + Math.sin(x / 47) * 0.7 + random() * 0.6).toFixed(1)]);
}
document.getElementById('rsi').setAttribute('d', 'M' + rsi.join('L'));

// drawing palette, name and icon
const ladder = '<path d="M2 11V6M5 9V3M8 7V2M10 5V1M2 11l8-8" stroke="#38c850"/>';
const fan = '<path d="M1 10L10 2M1 10l10-5M1 10l10-2M1 10h10" stroke="#ccc"/>';
const tools = [
    ['Pointer', '<path d="M6 1v10M1 6h10" stroke="#ccc"/>'],
    ['Crosshair', '<path d="M6 1v10M1 6h10" stroke="#eee"/><path d="M4 4h4v4H4z" stroke="#888"/>'],
    ['Hand', '<path d="M3 11L1 6l2 1V2h1l1 3V1h1l1 4 1-4h1v5l2-1-2 6z" fill="#fff"/>'],
    ['Eraser', '<path d="M3 2l7 6-2 3-7-6z" fill="#e87880"/>'],
    ['Trend line', '<path d="M2 9l8-6" stroke="#c8c020"/><path d="M0 8h3v3H0zM9 2h3v3H9z" fill="#e8e020"/>'],
    ['Text', '<text x="0" y="9" font-family="Liberation Serif, serif" font-size="8" font-weight="bold" fill="#f0e020">abc</text>'],
    ['Arcs', '<path d="M1 1c0 6 4 9 10 9M4 1c0 4 3 6 7 6M7 1c0 2 2 3 4 3" stroke="#c8c020"/>'],
    ['Fan', fan],
    ['Fibonacci', '<path d="M1 1h10M1 11h10" stroke="#b0b030"/><path d="M1 4h10M1 7h10" stroke="#b0b030" stroke-dasharray="1 1"/>'],
    ['Extension', '<path d="M1 1h10M1 11h10" stroke="#b0b030"/><path d="M1 4h10M3 5l3 4 3-4" stroke="#b0b030" stroke-dasharray="1 1"/>'],
    ['Time zones', '<path d="M2 1v10M6 1v10M10 1v10" stroke="#ccc"/>'],
    ['Anchor', '<circle cx="6" cy="2" r="1" stroke="#f09820"/><path d="M6 3v8M3 5h6M1 7c1 5 9 5 10 0" stroke="#f09820"/>'],
    ['Pitchfork', '<path d="M1 11l4-4M3 5l4-4M5 7l5-5M7 9l4-4M3 5l4 4" stroke="#a03828"/>'],
    ['Channel', ladder + '<path d="M4 12l7-8M1 8l7-8" stroke="#80e080"/>'],
    ['Speed lines', fan],
    ['Horizontal', '<path d="M1 6h10" stroke="#e8e020" stroke-width="2"/>'],
    ['Regression', ladder],
    ['Levels', '<path d="M0 1h12M0 4h12M0 8h12M0 11h12" stroke="#38a8b8"/>'],
    ['Zigzag', ladder],
    ['Parallel', ladder + '<path d="M4 12l7-8M1 8l7-8" stroke="#80e080"/>'],
    ['Gann fan', fan],
    ['Dashes', '<path d="M1 3h10M1 9h10" stroke="#ccc"/><path d="M1 6h10" stroke="#ccc" stroke-dasharray="1 1"/>'],
    ['Vertical', '<path d="M6 1v10" stroke="#ddd"/>'],
    ['Ellipse', '<ellipse cx="6" cy="6" rx="5" ry="4" fill="#1818f0" stroke="#6888ff"/>'],
    ['Rectangle', '<path d="M4 5h7v6H4z" stroke="#4878e0"/><path d="M1 1h5v5H1z" fill="#f0e820"/>'],
    ['Arrow', '<path d="M6 1l4 5H8v5H4V6H2z" fill="#3888f0"/>']
];
document.getElementById('tool-grid').innerHTML = tools
    .map(([name, icon]) => `<button aria-label="${name}"><svg viewBox="0 0 12 12">${icon}</svg></button>`)
    .join('');
```
